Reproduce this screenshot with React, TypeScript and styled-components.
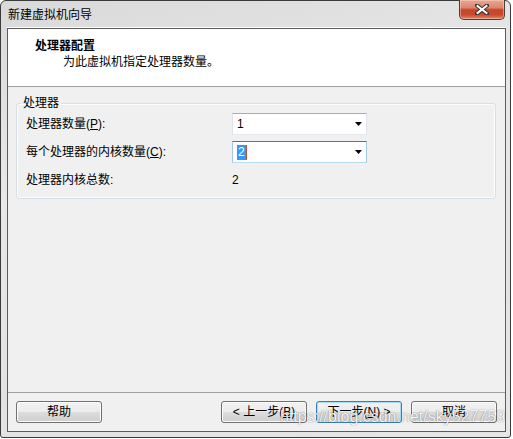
import React from "react";
import styled, { createGlobalStyle } from "styled-components";

const GlobalStyle = createGlobalStyle`
  html, body { margin: 0; padding: 0; background: #ffffff; }
  body {
    font-family: "Liberation Sans", "Noto Sans CJK SC", sans-serif;
    font-size: 12px;
    color: #000;
  }
  * { box-sizing: border-box; }
`;

const Window = styled.div`
  position: relative;
  width: 511px;
  height: 438px;
  border: 1px solid #3a3a3a;
  border-radius: 6px 6px 3px 3px;
  background: linear-gradient(165deg, #d9d9d9 0%, #e8e8e8 35%, #e2e2e2 70%, #e6e6e6 100%);
  padding: 0 4px 5px 6px;
  display: flex;
  flex-direction: column;
`;

const TitleBar = styled.div`
  height: 27px;
  display: flex;
  align-items: flex-start;
  padding-left: 1px;
`;

const Title = styled.div`
  margin-top: 7px;
  line-height: 14px;
  font-size: 12px;
  color: #000;
`;

const CloseButton = styled.div`
  margin-left: auto;
  margin-top: -1px;
  margin-right: 1px;
  width: 46px;
  height: 20px;
  border: 1px solid #4e3a36;
  border-top: none;
  border-radius: 0 0 5px 5px;
  background: linear-gradient(
    #e8a895 0%,
    #dc8670 40%,
    #c7452a 52%,
    #c94b2e 78%,
    #df8a68 100%
  );
  box-shadow: inset 0 0 0 1px rgba(255, 220, 200, 0.45);
  display: flex;
  align-items: center;
  justify-content: center;
`;

const Content = styled.div`
  flex: 1;
  display: flex;
  flex-direction: column;
  border: 1px solid #5c5c5c;
  background: #f0f0f0;
  box-shadow: 0 -1px 0 #ffffff;
`;

const Header = styled.div`
  height: 58px;
  background: #ffffff;
  border-bottom: 1px solid #a0a0a0;
  padding: 9px 0 0 27px;
`;

const HeaderTitle = styled.div`
  font-weight: bold;
  line-height: 16px;
  font-size: 12px;
`;

const HeaderSub = styled.div`
  line-height: 16px;
  padding-left: 28px;
`;

const Body = styled.div`
  flex: 1;
  padding: 9px 9px 0 8px;
`;

const GroupBox = styled.fieldset`
  margin: 0;
  padding: 3px 0 7px 9px;
  border: 1px solid #d5dfe5;
  border-radius: 3px;
  box-shadow: inset 0 0 0 1px #fbfcfd;
  min-width: 0;
`;

const Legend = styled.legend`
  margin-left: -5px;
  padding: 0 2px;
  line-height: 14px;
  font-size: 12px;
`;

const Grid = styled.div`
  display: grid;
  grid-template-columns: 206px 135px;
  grid-auto-rows: 22px;
  row-gap: 6px;
  align-items: center;
`;

const Label = styled.div`
  line-height: 22px;
`;

const Key = styled.span`
  text-decoration: underline;
`;

const Combo = styled.div<{ $focused?: boolean }>`
  height: 22px;
  width: 135px;
  background: #ffffff;
  border: 1px solid;
  border-color: ${(p) =>
    p.$focused
      ? "#3d7bad #a4c9e3 #b7d9ed #a4c9e3"
      : "#abadb3 #e2e3ea #e3e9ef #e2e3ea"};
  display: flex;
  align-items: center;
  justify-content: space-between;
  padding: 0 4px 0 4px;
`;

const ComboText = styled.span`
  line-height: 14px;
  display: flex;
  align-items: center;
`;

const Selected = styled.span`
  background: #3399ff;
  color: #ffffff;
  padding: 0 1px;
  line-height: 15px;
`;

const Caret = styled.span`
  display: inline-block;
  width: 1px;
  height: 15px;
  background: #b5541c;
`;

const Value = styled.div`
  line-height: 22px;
`;

const Footer = styled.div`
  border-top: 1px solid #a0a0a0;
  padding: 8px;
  display: flex;
  gap: 9px;
`;

const Button = styled.button<{ $default?: boolean; $push?: boolean }>`
  width: 86px;
  height: 22px;
  padding: 0;
  margin: 0;
  margin-right: ${(p) => (p.$push ? "auto" : "0")};
  border: 1px solid ${(p) => (p.$default ? "#3c7fb1" : "#707070")};
  border-radius: 3px;
  background: linear-gradient(#f2f2f2 0%, #ebebeb 50%, #dddddd 50%, #cfcfcf 100%);
  box-shadow: inset 0 0 0 1px ${(p) => (p.$default ? "#a8dcf5" : "#fcfcfc")};
  font-family: "Liberation Sans", "Noto Sans CJK SC", sans-serif;
  font-size: 12px;
  line-height: 20px;
  color: #000;
`;

const Watermark = styled.div`
  position: absolute;
  left: 279px;
  top: 408px;
  font-family: "Liberation Sans", sans-serif;
  font-size: 16px;
  line-height: 16px;
  color: rgba(255, 255, 255, 0.92);
  text-shadow: 0 0 1px rgba(0, 0, 0, 0.45), 0 0 2px rgba(0, 0, 0, 0.15);
  white-space: nowrap;
  pointer-events: none;
`;

const Arrow = () => (
  <svg width="7" height="4" viewBox="0 0 7 4">
    <polygon points="0,0 7,0 3.5,4" fill="#000" />
  </svg>
);

const CloseX = () => (
  <svg width="14" height="11" viewBox="0 0 14 11">
    <path d="M2 1.5 L12 9.5 M12 1.5 L2 9.5" stroke="#3a3030" strokeWidth="4" strokeLinecap="square" />
    <path d="M2.5 2 L11.5 9 M11.5 2 L2.5 9" stroke="#ffffff" strokeWidth="2" strokeLinecap="square" />
  </svg>
);

export default function App() {
  return (
    <>
      <GlobalStyle />
      <Window>
        <TitleBar>
          <Title>新建虚拟机向导</Title>
          <CloseButton>
            <CloseX />
          </CloseButton>
        </TitleBar>
        <Content>
          <Header>
            <HeaderTitle>处理器配置</HeaderTitle>
            <HeaderSub>为此虚拟机指定处理器数量。</HeaderSub>
          </Header>
          <Body>
            <GroupBox>
              <Legend>处理器</Legend>
              <Grid>
                <Label>
                  处理器数量(<Key>P</Key>):
                </Label>
                <Combo>
                  <ComboText>1</ComboText>
                  <Arrow />
                </Combo>
                <Label>
                  每个处理器的内核数量(<Key>C</Key>):
                </Label>
                <Combo $focused>
                  <ComboText>
                    <Selected>2</Selected>
                    <Caret />
                  </ComboText>
                  <Arrow />
                </Combo>
                <Label>处理器内核总数:</Label>
                <Value>2</Value>
              </Grid>
            </GroupBox>
          </Body>
          <Footer>
            <Button $push>帮助</Button>
            <Button>
              &lt; 上一步(<Key>B</Key>)
            </Button>
            <Button $default>
              下一步(<Key>N</Key>) &gt;
            </Button>
            <Button>取消</Button>
          </Footer>
        </Content>
        <Watermark>https://blog.csdn.net/sky527759</Watermark>
      </Window>
    </>
  );
}
